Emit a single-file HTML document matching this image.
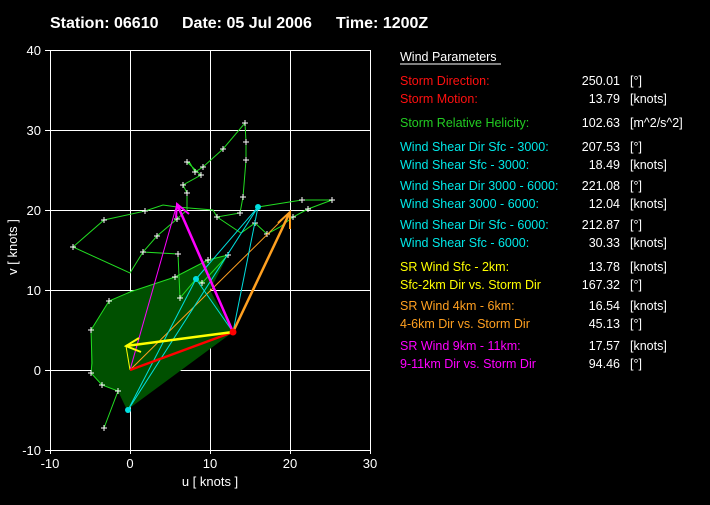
<!DOCTYPE html>
<html><head><style>
html,body{margin:0;padding:0;background:#000;}
body{width:710px;height:500px;overflow:hidden;}
svg text{font-family:"Liberation Sans",sans-serif;}
</style></head><body>
<svg width="710" height="500" viewBox="0 0 710 500" xmlns="http://www.w3.org/2000/svg">
<rect width="710" height="500" fill="#000"/>
<text x="50" y="28" fill="#fff" font-size="16" font-weight="bold">Station: 06610</text>
<text x="182" y="28" fill="#fff" font-size="16" font-weight="bold">Date: 05 Jul 2006</text>
<text x="336" y="28" fill="#fff" font-size="16" font-weight="bold">Time: 1200Z</text>
<!-- grid -->
<g stroke="#fff" stroke-width="1" shape-rendering="crispEdges">
<rect x="50.5" y="50.5" width="320" height="400" fill="none"/>
<line x1="130.5" y1="50" x2="130.5" y2="450"/><line x1="210.5" y1="50" x2="210.5" y2="450"/><line x1="290.5" y1="50" x2="290.5" y2="450"/>
<line x1="50" y1="130.5" x2="370" y2="130.5"/><line x1="50" y1="210.5" x2="370" y2="210.5"/><line x1="50" y1="290.5" x2="370" y2="290.5"/><line x1="50" y1="370.5" x2="370" y2="370.5"/>
<line x1="45" y1="50.5" x2="50" y2="50.5"/><line x1="45" y1="130.5" x2="50" y2="130.5"/><line x1="45" y1="210.5" x2="50" y2="210.5"/><line x1="45" y1="290.5" x2="50" y2="290.5"/><line x1="45" y1="370.5" x2="50" y2="370.5"/><line x1="45" y1="450.5" x2="50" y2="450.5"/>
<line x1="50.5" y1="450" x2="50.5" y2="454"/><line x1="130.5" y1="450" x2="130.5" y2="454"/><line x1="210.5" y1="450" x2="210.5" y2="454"/><line x1="290.5" y1="450" x2="290.5" y2="454"/><line x1="370.5" y1="450" x2="370.5" y2="454"/>
</g>
<g fill="#fff" font-size="13" text-anchor="end">
<text x="41" y="55">40</text><text x="41" y="135">30</text><text x="41" y="215">20</text><text x="41" y="295">10</text><text x="41" y="375">0</text><text x="41" y="455">-10</text>
</g>
<g fill="#fff" font-size="13" text-anchor="middle">
<text x="50" y="468">-10</text><text x="130" y="468">0</text><text x="210" y="468">10</text><text x="290" y="468">20</text><text x="370" y="468">30</text>
<text x="210" y="486">u  [ knots ]</text>
<text x="0" y="0" transform="translate(17,247) rotate(-90)">v  [ knots ]</text>
</g>
<!-- shaded area -->
<polygon points="109,301 130,292 175,277 208,260 228,255 210,290 233,332 127,410 118,391 102,385 91,373 91,330" fill="#005000"/>
<!-- green hodograph -->
<polyline fill="none" stroke="#22dd22" stroke-width="1" points="104,428 118,391 102,385 91,373 92,363 91,330 109,301 130,292 175,277 208,260 228,255 202,283 196,279 180,298 178,254 143,252 157,236 177,219 187,210 187,193 183,185 201,175 187,162 190,163 195,172 203,167 223,149 245,123 246,142 246,160 243,197 240,213 217,217 213,210 177,207 163,205 145,211 104,220 73,247 130,273 143,252"/>
<polyline fill="none" stroke="#22dd22" stroke-width="1" points="258,207 302,200 332,200 308,209 293,217 280,227 267,234 255,223 241,233 217,217"/>
<g stroke="#fff" stroke-width="1">
<path d="M101,428h6M104,425v6 M115,391h6M118,388v6 M99,385h6M102,382v6 M88,373h6M91,370v6 M88,330h6M91,327v6 M106,301h6M109,298v6 M172,277h6M175,274v6 M205,260h6M208,257v6 M225,255h6M228,252v6 M199,283h6M202,280v6 M177,298h6M180,295v6 M175,254h6M178,251v6 M140,252h6M143,249v6 M154,236h6M157,233v6 M174,219h6M177,216v6 M184,193h6M187,190v6 M180,185h6M183,182v6 M198,175h6M201,172v6 M184,162h6M187,159v6 M192,172h6M195,169v6 M200,167h6M203,164v6 M220,149h6M223,146v6 M242,123h6M245,120v6 M243,142h6M246,139v6 M243,160h6M246,157v6 M240,197h6M243,194v6 M237,213h6M240,210v6 M214,217h6M217,214v6 M142,211h6M145,208v6 M101,220h6M104,217v6 M70,247h6M73,244v6 M299,200h6M302,197v6 M329,200h6M332,197v6 M305,209h6M308,206v6 M290,217h6M293,214v6 M264,234h6M267,231v6 M252,223h6M255,220v6"/>
</g>
<!-- thin lines -->
<g stroke-width="1" fill="none">
<line x1="130" y1="370" x2="290" y2="212" stroke="#ffa020"/>
<line x1="128" y1="410" x2="258" y2="207" stroke="#00e0e0"/>
<line x1="128" y1="410" x2="196" y2="279" stroke="#00e0e0"/>
<line x1="196" y1="279" x2="258" y2="207" stroke="#00e0e0"/>
<line x1="233" y1="332" x2="196" y2="279" stroke="#00e0e0"/>
<line x1="233" y1="332" x2="258" y2="207" stroke="#00e0e0"/>
<line x1="130" y1="370" x2="177" y2="204" stroke="#ff00ff"/>
<line x1="130" y1="370" x2="126" y2="346" stroke="#ffff00"/>
</g>
<!-- thick arrows -->
<line x1="130" y1="370" x2="233" y2="332" stroke="#ff0000" stroke-width="2.5"/>
<line x1="233" y1="332" x2="126" y2="346" stroke="#ffff00" stroke-width="2.5"/>
<path d="M139,338 L126,346 L141,352" stroke="#ffff00" stroke-width="2" fill="none"/>
<line x1="233" y1="332" x2="290" y2="212" stroke="#ffa020" stroke-width="2.5"/>
<path d="M278,223 L290,212 L290,229" stroke="#ffa020" stroke-width="2" fill="none"/>
<line x1="233" y1="332" x2="177" y2="204" stroke="#ff00ff" stroke-width="2.5"/>
<path d="M176,218 L177,204 L189,214" stroke="#ff00ff" stroke-width="2" fill="none"/>
<circle cx="233" cy="332" r="3.5" fill="#ff0000"/>
<circle cx="128" cy="410" r="3" fill="#00e0e0"/>
<circle cx="196" cy="279" r="3" fill="#00e0e0"/>
<circle cx="258" cy="207" r="3" fill="#00e0e0"/>
<!-- right panel -->
<g font-size="12.5">
<text x="400" y="61" fill="#fff">Wind Parameters</text>
<line x1="400" y1="64" x2="501" y2="64" stroke="#fff" stroke-width="1"/>
<g fill="#ff1010"><text x="400" y="85">Storm Direction:</text><text x="400" y="103">Storm Motion:</text></g>
<text x="400" y="127" fill="#22cc22">Storm Relative Helicity:</text>
<g fill="#00e8e8"><text x="400" y="151">Wind Shear Dir Sfc - 3000:</text><text x="400" y="169">Wind Shear Sfc - 3000:</text><text x="400" y="190">Wind Shear Dir 3000 - 6000:</text><text x="400" y="208">Wind Shear 3000 - 6000:</text><text x="400" y="229">Wind Shear Dir Sfc - 6000:</text><text x="400" y="247">Wind Shear Sfc - 6000:</text></g>
<g fill="#ffff00"><text x="400" y="271">SR Wind Sfc - 2km:</text><text x="400" y="289">Sfc-2km Dir vs. Storm Dir</text></g>
<g fill="#ffa020"><text x="400" y="310">SR Wind 4km - 6km:</text><text x="400" y="328">4-6km Dir vs. Storm Dir</text></g>
<g fill="#ff00ff"><text x="400" y="350">SR Wind 9km - 11km:</text><text x="400" y="368">9-11km Dir vs. Storm Dir</text></g>
<g fill="#fff" text-anchor="end">
<text x="620" y="85">250.01</text><text x="620" y="103">13.79</text><text x="620" y="127">102.63</text><text x="620" y="151">207.53</text><text x="620" y="169">18.49</text><text x="620" y="190">221.08</text><text x="620" y="208">12.04</text><text x="620" y="229">212.87</text><text x="620" y="247">30.33</text><text x="620" y="271">13.78</text><text x="620" y="289">167.32</text><text x="620" y="310">16.54</text><text x="620" y="328">45.13</text><text x="620" y="350">17.57</text><text x="620" y="368">94.46</text>
</g>
<g fill="#fff">
<text x="630" y="85">[°]</text><text x="630" y="103">[knots]</text><text x="630" y="127">[m^2/s^2]</text><text x="630" y="151">[°]</text><text x="630" y="169">[knots]</text><text x="630" y="190">[°]</text><text x="630" y="208">[knots]</text><text x="630" y="229">[°]</text><text x="630" y="247">[knots]</text><text x="630" y="271">[knots]</text><text x="630" y="289">[°]</text><text x="630" y="310">[knots]</text><text x="630" y="328">[°]</text><text x="630" y="350">[knots]</text><text x="630" y="368">[°]</text>
</g>
</g>
</svg>
</body></html>
